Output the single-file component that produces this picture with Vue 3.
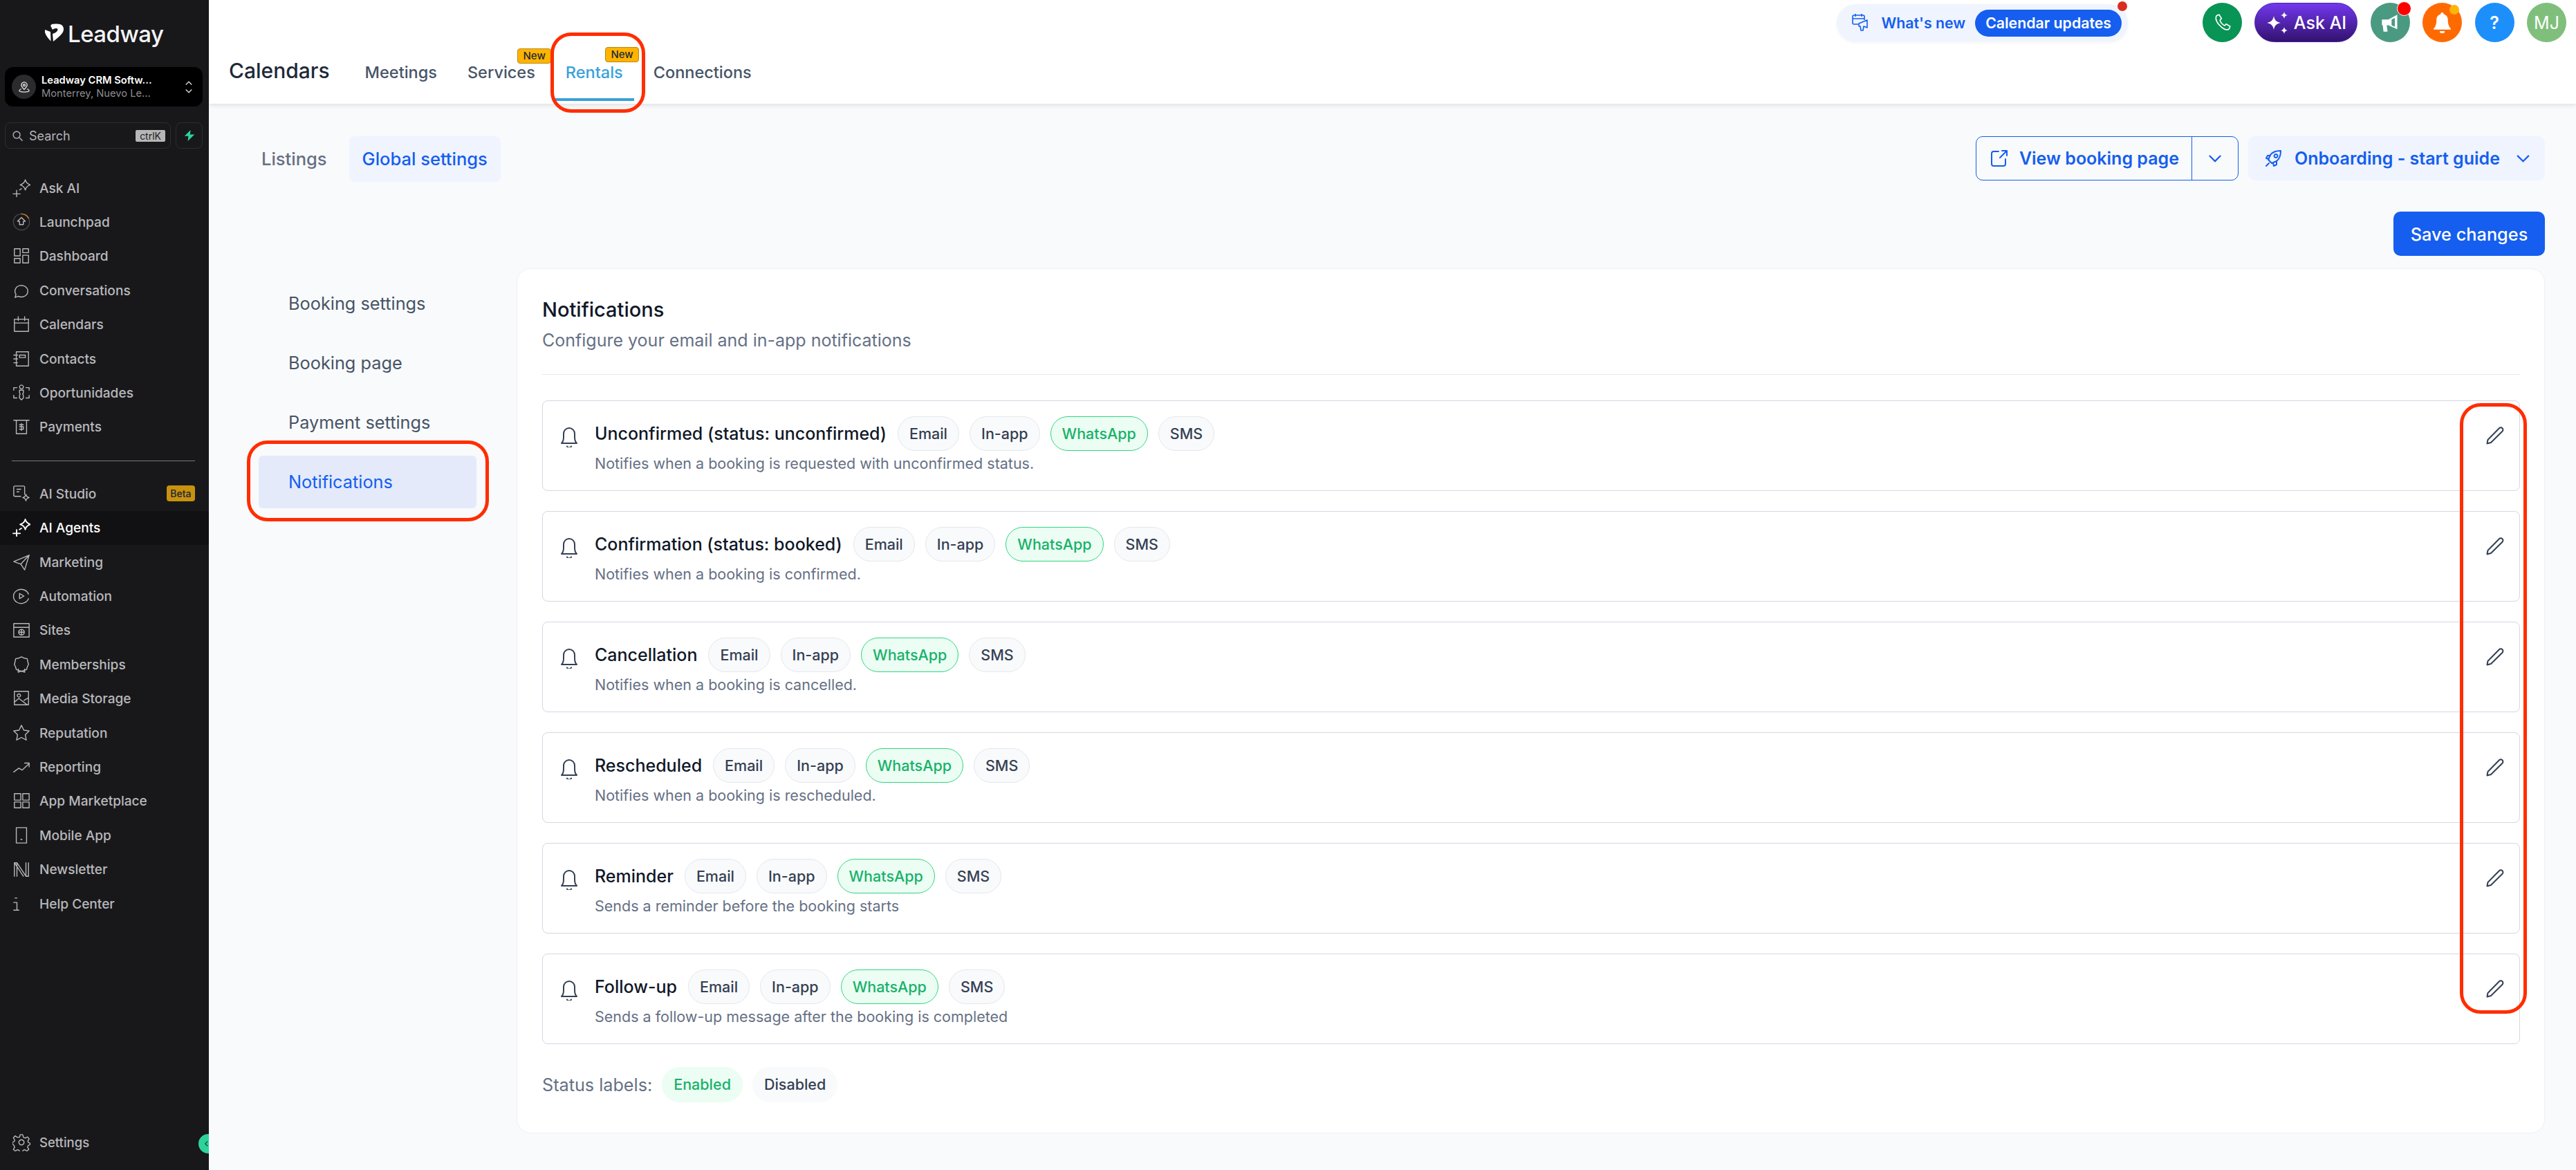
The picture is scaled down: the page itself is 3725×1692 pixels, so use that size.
<template>
  <div class="app">
    <aside class="sidebar">
      <div class="logo">
        <svg class="logo-mark" viewBox="0 0 28 30">
          <path d="M8 3 L10 1 C13 .5 19 0 23 1.5 C28 4 28 10 25 14 C22 18 17 22 12 26 L11 15 C14 14 18 12 18.500 9 C18.500 6 13 7 11 9 Z" fill="#fff" />
          <path d="M0 9 L8 12 L8.500 25.500 C5 22 1.500 18 0 13 Z" fill="#fff" />
        </svg>
        <span class="logo-text">Leadway</span>
      </div>

      <div class="location">
        <span class="location-icon">
          <svg viewBox="0 0 24 24" class="icon-sm"><path d="M12 3.500a5 5 0 0 0-5 5c0 3 3 5.500 5 7.500 2-2 5-4.500 5-7.500a5 5 0 0 0-5-5z" /><circle cx="12" cy="8.500" r="1.800" /><path d="M7 15c-2 .8-3.500 1.800-3.500 3 0 1.700 3.800 2.500 8.500 2.500s8.500-.8 8.500-2.500c0-1.200-1.500-2.200-3.500-3" /></svg>
        </span>
        <span class="location-text">
          <span class="location-name">Leadway CRM Softw...</span>
          <span class="location-city">Monterrey, Nuevo Le...</span>
        </span>
        <svg viewBox="0 0 14 24" class="location-arrows"><path d="M2 8l5-5 5 5M2 16l5 5 5-5" /></svg>
      </div>

      <div class="search-row">
        <div class="search">
          <svg viewBox="0 0 24 24" class="search-icon"><circle cx="10" cy="10" r="7" /><path d="M15.500 15.500L22 22" /></svg>
          <span class="search-label">Search</span>
          <span class="kbd">ctrlK</span>
        </div>
        <div class="bolt">
          <svg viewBox="0 0 20 20" width="16" height="16"><path d="M12 0L1 11h7l-1 9 12-12h-8z" fill="#2fd29a" /></svg>
        </div>
      </div>

      <nav class="nav nav-first">
        <div v-for="item in navTop" :key="item.label" class="nav-item">
          <svg viewBox="0 0 28 28" class="nav-icon">
            <template v-if="item.ring">
              <circle class="ring" cx="14" cy="14" r="12.500" />
              <path class="ring-arc" d="M14 1.500a12.500 12.500 0 0 1 11 6.500" />
            </template>
            <path v-for="(d, i) in icons[item.icon]" :key="i" :d="d" />
          </svg>
          <span>{{ item.label }}</span>
        </div>
      </nav>

      <div class="nav-divider"></div>

      <nav class="nav">
        <div
          v-for="item in navBottom"
          :key="item.label"
          class="nav-item"
          :class="{ 'nav-active': item.active }"
        >
          <svg viewBox="0 0 28 28" class="nav-icon"><path v-for="(d, i) in icons[item.icon]" :key="i" :d="d" /></svg>
          <span>{{ item.label }}</span>
          <span v-if="item.badge" class="beta">{{ item.badge }}</span>
        </div>
      </nav>

      <div class="settings">
        <svg viewBox="0 0 28 28" class="nav-icon"><path v-for="(d, i) in icons.gear" :key="i" :d="d" /></svg>
        <span>Settings</span>
        <span class="collapse">
          <svg viewBox="0 0 12 16" width="10" height="14"><path d="M9 2L3 8l6 6" /></svg>
        </span>
      </div>
    </aside>

    <div class="main">
      <header class="header">
        <div class="header-left">
          <div class="page-title">Calendars</div>
          <div class="tabs">
            <div
              v-for="tab in tabs"
              :key="tab.label"
              class="tab"
              :class="{ 'tab-active': tab.active }"
            >
              {{ tab.label }}
              <span v-if="tab.isNew" class="new-badge">New</span>
            </div>
          </div>
        </div>
        <div class="header-right">
          <div class="whats-new">
            <svg viewBox="0 0 28 28" class="whats-icon">
              <path d="M10 16H4a2 2 0 0 1-2-2V5a2 2 0 0 1 2-2h13a2 2 0 0 1 2 2v5M2 8h17M6 1v4M15 1v4" />
              <path d="M11 15l12-5v11l-5-2-1 6h-3l-1-6h-2z" />
            </svg>
            <span class="whats-label">What's new</span>
            <span class="whats-pill">Calendar updates</span>
            <span class="whats-dot"></span>
          </div>
          <div class="round-buttons">
            <span class="round phone">
              <svg viewBox="0 0 24 24" width="27" height="27"><path d="M5 3l3-1 3 5-2 2c.7 2.500 3 5.500 6 7l2-2 5 3-1 3c-1 1.500-3 1.500-5 1-3-1-6-3.500-8.500-6.500S4 9 3.800 7C3.700 5 4 4 5 3z" /></svg>
            </span>
            <span class="ask-ai">
              <svg viewBox="0 0 32 36" width="32" height="36"><path d="M11 8c1 6 4 9 10 10-6 1-9 4-10 10-1-6-4-9-10-10 6-1 9-4 10-10zM26 2c.6 3 2 4.400 5 5-3 .6-4.400 2-5 5-.6-3-2-4.400-5-5 3-.6 4.400-2 5-5zM26 24c.6 3 2 4.400 5 5-3 .6-4.400 2-5 5-.6-3-2-4.400-5-5 3-.6 4.400-2 5-5z" fill="#fff" /></svg>
              Ask AI
            </span>
            <span class="round megaphone">
              <svg viewBox="1 1 22 24" width="26" height="28"><path d="M2 9h8l11-6v18l-11-5H8l1 8H4l-1-8H2zM14 9v7l4 2V7z" fill="#fff" fill-rule="evenodd" /></svg>
              <span class="dot-red"></span>
            </span>
            <span class="round bell-btn">
              <svg viewBox="0 0 26 30" width="27" height="31"><path d="M13 1a2 2 0 0 1 2 2.500c4 1 6 4 6 8 0 5 1 9 4 12v1.500H1V23.500c3-3 4-7 4-12 0-4 2-7 6-8A2 2 0 0 1 13 1zM9.500 27h7a3.500 3.500 0 0 1-7 0z" fill="#fff" /></svg>
              <span class="dot-yellow"></span>
            </span>
            <span class="round help">?</span>
            <span class="round avatar">MJ</span>
          </div>
        </div>
      </header>

      <div class="content">
        <div class="toolbar">
          <div class="subtabs">
            <span class="subtab">Listings</span>
            <span class="subtab subtab-active">Global settings</span>
          </div>
          <div class="toolbar-actions">
            <div class="view-booking">
              <span class="view-main">
                <svg viewBox="0 0 26 26" class="btn-icon"><path d="M12 3H5a3 3 0 0 0-3 3v15a3 3 0 0 0 3 3h14a3 3 0 0 0 3-3v-7M14 12L24 2M17 2h7v7" /></svg>
                View booking page
              </span>
              <span class="view-caret">
                <svg viewBox="0 0 22 14" class="caret"><path d="M2 2l9 9 9-9" /></svg>
              </span>
            </div>
            <div class="onboarding">
              <svg viewBox="0 0 26 26" class="btn-icon"><path d="M8 18l-3-3 3-7c3-4 8-6 15-6 0 7-2 12-6 15l-7 3zM8 9H4l-2 4 4 1M17 18v4l-4 2-1-4M6 20l-4 4M16 7a2.500 2.500 0 1 0 .1 0z" /></svg>
              Onboarding - start guide
              <svg viewBox="0 0 22 14" class="caret onboarding-caret"><path d="M2 2l9 9 9-9" /></svg>
            </div>
          </div>
        </div>

        <div class="save-row">
          <button class="save">Save changes</button>
        </div>

        <div class="settings-layout">
          <div class="side-menu">
            <div
              v-for="entry in sideMenu"
              :key="entry.label"
              class="side-item"
              :class="{ 'side-active': entry.active }"
            >{{ entry.label }}</div>
          </div>

          <section class="card">
            <h2 class="card-title">Notifications</h2>
            <p class="card-sub">Configure your email and in-app notifications</p>
            <div class="card-divider"></div>

            <div class="rows">
              <div v-for="row in rows" :key="row.title" class="row">
                <svg viewBox="0 0 26 30" class="row-bell"><path d="M2 24c2-2 3-5 3-9v-5a8 8 0 0 1 16 0v5c0 4 1 7 3 9z" /><path d="M10 28.500a3.200 3.200 0 0 0 6 0" /></svg>
                <div class="row-body">
                  <div class="row-head">
                    <span class="row-title">{{ row.title }}</span>
                    <span
                      v-for="chip in channels"
                      :key="chip"
                      class="chip"
                      :class="{ 'chip-green': chip === 'WhatsApp' }"
                    >{{ chip }}</span>
                  </div>
                  <div class="row-desc">{{ row.desc }}</div>
                </div>
                <svg viewBox="0 0 26 26" class="pencil"><path d="M1.500 24.500l1-5.500L19 2.300a3 3 0 0 1 4.500 4.400L7 23z" /></svg>
              </div>
            </div>

            <div class="status">
              <span class="status-label">Status labels:</span>
              <span class="status-chip status-on">Enabled</span>
              <span class="status-chip status-off">Disabled</span>
            </div>
          </section>
        </div>
      </div>
    </div>

    <!-- hand drawn annotations that sit on top of the screenshot -->
    <div class="mark mark-rentals"></div>
    <div class="mark mark-notifications"></div>
    <div class="mark mark-pencils"></div>
  </div>
</template>

<script setup>
const icons = {
  spark: ['M1 23h11M6.500 17.500v11M11 17l3-2M20 1c1 4.500 3 6.500 8 8-5 1.500-7 3.500-8 8-1-4.500-3-6.500-8-8 5-1.500 7-3.500 8-8z'],
  launch: ['M14 7l6 6h-3v5h-6v-5H8z'],
  dashboard: ['M3 3h9v11H3zM16 3h9v6h-9zM3 18h9v7H3zM16 13h9v12h-9z'],
  chat: ['M4 25l1.500-5A10 9 0 1 1 9 23z'],
  calendar: ['M3 6h22v19H3zM3 12h22M9 2v6M19 2v6'],
  contacts: ['M6 3h19v22H6zM2 8h6M2 14h6M2 20h6M11 8h9v4h-9z'],
  opps: ['M14 2a3 3 0 1 0 .1 0zM11 10h6v4l-1 2 1 2v4l-3 3-3-3v-4l1-2-1-2zM2 6h5M2 6v4M26 6h-5M26 6v4M2 22h5M2 22v-4M26 22h-5M26 22v-4'],
  payments: ['M2 4h24M6 4v21h16V4M11 11h6M11 14h6v4h-6M14 9v11'],
  studio: ['M19 15V4a2 2 0 0 0-2-2H4a2 2 0 0 0-2 2v12a2 2 0 0 0 2 2h9M7 7h6M7 11h3M21 15c.5 3 2 4.500 5 5-3 .5-4.500 2-5 5-.5-3-2-4.500-5-5 3-.5 4.500-2 5-5z'],
  send: ['M2 13L26 3l-7 23-6-9zM13 17L26 3'],
  play: ['M25 11A12 11 0 1 0 25 18M11 10l7 4-7 4z'],
  site: ['M2 4h24v21H2zM2 10h24M14 13a4.500 4.500 0 1 0 .1 0zM9.500 17.500h9M14 13v9'],
  badge: ['M14 2l4 2 5 1 1 5 1 4-2 4-1 4-4 1-4 2-4-2-4-1-1-4-2-4 1-4 1-5 5-1zM9 21v5l5-2 5 2v-5'],
  media: ['M3 3h22v21H3zM3 20l7-6 13 10M18 17l7-4M10 7a2.500 2.500 0 1 0 .1 0z'],
  star: ['M14 2l3.700 7.700 8.300 1.100-6 5.800 1.500 8.400-7.500-4-7.500 4 1.500-8.400-6-5.800 8.300-1.100z'],
  trend: ['M2 22l8-6 5 3 11-10M19 8h7v6'],
  grid: ['M3 3h10v10H3zM16 3h10v10H16zM3 16h10v9H3zM16 16h10v9H16z'],
  phone: ['M6 2h16v24H6zM13 20.500h2'],
  news: ['M3 25V4h4l14 21h4V4M7 4v21M21 4v21M3 4l14 21'],
  info: ['M4 5h3M2 12h5v12M2 24h8'],
  gear: ['M12 2h4l1 4 3 1.500 3.500-2 2.500 3-2 3.500.5 2 3 1.500v2l-3 1.500-1 2.500 2 3.500-3 2.500-3.500-2-2.500 1-1 3h-4l-1-3-2.500-1-3.500 2-3-2.500 2-3.500-1-2.500L0 16v-2l3-1.500.5-2-2-3.500L4 4l3.500 2L11 6zM14 10a4 4 0 1 0 .1 0z']
}

const navTop = [
  { label: 'Ask AI', icon: 'spark' },
  { label: 'Launchpad', icon: 'launch', ring: true },
  { label: 'Dashboard', icon: 'dashboard' },
  { label: 'Conversations', icon: 'chat' },
  { label: 'Calendars', icon: 'calendar' },
  { label: 'Contacts', icon: 'contacts' },
  { label: 'Oportunidades', icon: 'opps' },
  { label: 'Payments', icon: 'payments' }
]

const navBottom = [
  { label: 'AI Studio', icon: 'studio', badge: 'Beta' },
  { label: 'AI Agents', icon: 'spark', active: true },
  { label: 'Marketing', icon: 'send' },
  { label: 'Automation', icon: 'play' },
  { label: 'Sites', icon: 'site' },
  { label: 'Memberships', icon: 'badge' },
  { label: 'Media Storage', icon: 'media' },
  { label: 'Reputation', icon: 'star' },
  { label: 'Reporting', icon: 'trend' },
  { label: 'App Marketplace', icon: 'grid' },
  { label: 'Mobile App', icon: 'phone' },
  { label: 'Newsletter', icon: 'news' },
  { label: 'Help Center', icon: 'info' }
]

const tabs = [
  { label: 'Meetings' },
  { label: 'Services', isNew: true },
  { label: 'Rentals', isNew: true, active: true },
  { label: 'Connections' }
]

const sideMenu = [
  { label: 'Booking settings' },
  { label: 'Booking page' },
  { label: 'Payment settings' },
  { label: 'Notifications', active: true }
]

const channels = ['Email', 'In-app', 'WhatsApp', 'SMS']

const rows = [
  { title: 'Unconfirmed (status: unconfirmed)', desc: 'Notifies when a booking is requested with unconfirmed status.' },
  { title: 'Confirmation (status: booked)', desc: 'Notifies when a booking is confirmed.' },
  { title: 'Cancellation', desc: 'Notifies when a booking is cancelled.' },
  { title: 'Rescheduled', desc: 'Notifies when a booking is rescheduled.' },
  { title: 'Reminder', desc: 'Sends a reminder before the booking starts' },
  { title: 'Follow-up', desc: 'Sends a follow-up message after the booking is completed' }
]
</script>

<style>
html, body {
  margin: 0;
  background: #f9fafb;
}
</style>

<style scoped>
.app {
  position: relative;
  display: flex;
  width: 3725px;
  height: 1692px;
  overflow: hidden;
  font-family: Inter, "Liberation Sans", sans-serif;
  background: #f9fafb;
}

/* sidebar */
.sidebar {
  position: relative;
  display: flex;
  flex-direction: column;
  flex: 0 0 302px;
  background: #18181b;
  color: #b8b8bb;
}

.logo {
  display: flex;
  align-items: center;
  gap: 5px;
  height: 97px;
  padding-left: 65px;
  box-sizing: border-box;
}

.logo-mark {
  width: 28px;
  height: 30px;
}

.logo-text {
  color: #f4f4f5;
  font-size: 33px;
  font-weight: 500;
  letter-spacing: -0.5px;
}

.location {
  display: flex;
  align-items: center;
  height: 57px;
  margin: 0 9px 0 7px;
  padding: 0 14px 0 10px;
  background: #000;
  border-radius: 12px;
}

.location-icon {
  display: flex;
  align-items: center;
  justify-content: center;
  width: 35px;
  height: 35px;
  border-radius: 50%;
  background: #2b2b2e;
}

.icon-sm {
  width: 20px;
  height: 20px;
  fill: none;
  stroke: #e4e4e7;
  stroke-width: 1.600;
}

.location-text {
  display: flex;
  flex-direction: column;
  flex: 1;
  margin-left: 8px;
  gap: 1px;
  white-space: nowrap;
}

.location-name {
  color: #fff;
  font-size: 14.700px;
  font-weight: 600;
  line-height: 18px;
}

.location-city {
  color: #8c8c90;
  font-size: 14.700px;
  line-height: 18px;
}

.location-arrows {
  width: 12px;
  height: 22px;
  fill: none;
  stroke: #d4d4d8;
  stroke-width: 1.600;
}

.search-row {
  display: flex;
  gap: 7px;
  margin: 23px 9px 0 7px;
}

.search {
  display: flex;
  align-items: center;
  flex: 1;
  height: 38px;
  padding: 0 7px 0 9px;
  border: 1px solid #2d2d31;
  border-radius: 8px;
  box-sizing: border-box;
}

.search-icon {
  width: 17px;
  height: 17px;
  fill: none;
  stroke: #a1a1aa;
  stroke-width: 2.200;
}

.search-label {
  flex: 1;
  margin-left: 8px;
  font-size: 18px;
  color: #b3b3b6;
}

.kbd {
  padding: 0 6px;
  background: #b6b6b8;
  color: #222;
  font-size: 14px;
  line-height: 17px;
  border-radius: 2px;
}

.bolt {
  display: flex;
  align-items: center;
  justify-content: center;
  width: 39px;
  height: 38px;
  border: 1px solid #2d2d31;
  border-radius: 8px;
  box-sizing: border-box;
}

.nav {
  display: flex;
  flex-direction: column;
}

.nav-first {
  margin-top: 32px;
}

.nav-item {
  display: flex;
  align-items: center;
  height: 49.400px;
  padding: 0 20px 0 18px;
  font-size: 19.100px;
  font-weight: 500;
}

.nav-item span:first-of-type {
  margin-left: 13px;
}

.nav-icon {
  flex: none;
  width: 26px;
  height: 26px;
  fill: none;
  stroke: #b8b8bb;
  stroke-width: 1.500;
  stroke-linejoin: round;
  stroke-linecap: round;
}

.ring {
  stroke: #47474b;
}

.ring-arc {
  stroke: #d9822b;
}

.nav-divider {
  height: 1px;
  margin: 24px 20px 22px 17px;
  background: #77777b;
}

.nav-active {
  color: #fff;
  background: #111113;
  border-radius: 4px;
}

.nav-active .nav-icon {
  stroke: #fff;
  stroke-width: 2;
}

.beta {
  margin-left: auto;
  padding: 0 5.500px;
  background: #c8920c;
  color: #18233f;
  font-size: 14px;
  line-height: 23px;
  border-radius: 4px;
}

.settings {
  position: relative;
  display: flex;
  align-items: center;
  gap: 13px;
  margin-top: auto;
  height: 80px;
  padding: 0 0 0 18px;
  font-size: 18.500px;
  font-weight: 500;
}

.collapse {
  position: absolute;
  right: 0;
  top: 28px;
  display: flex;
  align-items: center;
  width: 15px;
  height: 28px;
  background: #2fd29a;
  border-radius: 14px 0 0 14px;
  overflow: hidden;
}

.collapse svg {
  margin-left: 8px;
  fill: none;
  stroke: #0f5c45;
  stroke-width: 2.500;
}

/* header */
.main {
  display: flex;
  flex-direction: column;
  flex: 1;
  min-width: 0;
}

.header {
  display: flex;
  justify-content: space-between;
  height: 150px;
  padding: 0 14px 0 29px;
  background: #fff;
  box-shadow: 0 2px 6px rgba(16, 24, 40, 0.12);
  position: relative;
}

.header-left {
  display: flex;
  align-items: flex-end;
  gap: 35px;
  padding-bottom: 4px;
}

.page-title {
  padding-bottom: 26px;
  color: #1d2939;
  font-size: 30px;
  font-weight: 500;
  line-height: 36px;
}

.tabs {
  display: flex;
  gap: 12px;
}

.tab {
  position: relative;
  padding: 0 16px 18px;
  border-bottom: 4px solid transparent;
  color: #475467;
  font-size: 23.500px;
  font-weight: 500;
  line-height: 38px;
  white-space: nowrap;
}

.tab-active {
  color: #38a0db;
  border-bottom-color: #38a0db;
}

.new-badge {
  position: absolute;
  right: -7px;
  top: -16px;
  padding: 0 7px;
  background: #ffb400;
  border: 1px solid #b98a11;
  border-radius: 4px;
  color: #1d2939;
  font-size: 15px;
  line-height: 20px;
}

.tab-active .new-badge {
  top: -18px;
}

.header-right {
  display: flex;
  align-items: flex-start;
  gap: 108px;
  padding-top: 4px;
}

.whats-new {
  position: relative;
  display: flex;
  align-items: center;
  height: 54px;
  margin-top: 2px;
  padding: 0 9px 0 21px;
  background: #eff4ff;
  border-radius: 27px;
  box-shadow: 0 2px 4px rgba(16, 24, 40, 0.05);
}

.whats-icon {
  width: 28px;
  height: 28px;
  fill: none;
  stroke: #155eef;
  stroke-width: 1.600;
  stroke-linejoin: round;
}

.whats-label {
  margin: 0 14px 0 16px;
  color: #155eef;
  font-size: 21.300px;
  font-weight: 600;
}

.whats-pill {
  padding: 0 15px;
  background: #155eef;
  color: #fff;
  font-size: 21.300px;
  font-weight: 600;
  line-height: 39px;
  border-radius: 20px;
}

.whats-dot {
  position: absolute;
  right: 1px;
  top: -4px;
  width: 14px;
  height: 14px;
  border-radius: 50%;
  background: #d92d20;
}

.round-buttons {
  display: flex;
  gap: 18.400px;
}

.round {
  position: relative;
  display: flex;
  align-items: center;
  justify-content: center;
  width: 57px;
  height: 57px;
  border-radius: 50%;
  color: #fff;
  font-size: 25px;
}

.phone {
  background: #079455;
}

.phone svg {
  fill: none;
  stroke: #fff;
  stroke-width: 1.500;
}

.ask-ai {
  display: flex;
  align-items: center;
  justify-content: center;
  gap: 8px;
  width: 149px;
  height: 57px;
  box-sizing: border-box;
  border: 1px solid #4a22a8;
  border-radius: 29px;
  background: linear-gradient(180deg, #7337ee 0%, #32126f 100%);
  color: #fff;
  font-size: 25px;
  font-weight: 500;
}

.megaphone {
  background: #4a9a82;
}

.dot-red {
  position: absolute;
  top: -2px;
  right: -2px;
  width: 19px;
  height: 19px;
  border-radius: 50%;
  background: #ff0000;
  border: 1px solid #fff;
}

.bell-btn {
  background: #ff6a00;
}

.dot-yellow {
  position: absolute;
  top: 3px;
  right: 4px;
  width: 14px;
  height: 14px;
  border-radius: 50%;
  background: #fdb408;
}

.help {
  background: #1c8ffb;
  font-weight: 600;
}

.avatar {
  background: #7fbf7b;
  font-size: 25px;
}

/* content */
.content {
  display: flex;
  flex-direction: column;
  flex: 1;
  padding: 47px 45px 0 57px;
}

.toolbar {
  display: flex;
  justify-content: space-between;
  align-items: flex-start;
}

.subtabs {
  display: flex;
  gap: 13px;
}

.subtab {
  padding: 0 19px;
  color: #667085;
  font-size: 25.500px;
  font-weight: 500;
  line-height: 66px;
  border-radius: 8px;
}

.subtab-active {
  background: #eff4ff;
  color: #155eef;
}

.toolbar-actions {
  display: flex;
  gap: 14px;
}

.view-booking {
  display: flex;
  height: 64px;
  box-sizing: border-box;
  border: 1px solid #155eef;
  border-radius: 10px;
  color: #155eef;
  font-size: 25px;
  font-weight: 600;
}

.view-main {
  display: flex;
  align-items: center;
  gap: 16px;
  padding: 0 18px 0 20px;
}

.view-caret {
  display: flex;
  align-items: center;
  justify-content: center;
  width: 66px;
  border-left: 1px solid #155eef;
}

.btn-icon {
  width: 26px;
  height: 26px;
  fill: none;
  stroke: #155eef;
  stroke-width: 2;
  stroke-linejoin: round;
  stroke-linecap: round;
}

.caret {
  width: 20px;
  height: 13px;
  fill: none;
  stroke: #155eef;
  stroke-width: 2.400;
}

.onboarding-caret {
  width: 23px;
  margin-left: 5px;
}

.onboarding {
  display: flex;
  align-items: center;
  gap: 17px;
  height: 64px;
  padding: 0 20px 0 24px;
  background: #eff4ff;
  border-radius: 10px;
  color: #155eef;
  font-size: 25px;
  font-weight: 600;
}

.save-row {
  display: flex;
  justify-content: flex-end;
  margin-top: 43px;
}

.save {
  width: 219px;
  height: 64px;
  border: 0;
  border-radius: 10px;
  background: #155eef;
  color: #fff;
  font-family: inherit;
  font-size: 25.300px;
  font-weight: 500;
}

.settings-layout {
  display: flex;
  margin-top: 18px;
  gap: 58px;
}

.side-menu {
  display: flex;
  flex-direction: column;
  flex: 0 0 315px;
  gap: 10px;
  margin: 13px 0 0 15px;
}

.side-item {
  padding-left: 43px;
  color: #475467;
  font-size: 25.300px;
  font-weight: 400;
  line-height: 76px;
  border-radius: 6px;
}

.side-active {
  background: #e4eafa;
  color: #155eef;
}

.card {
  flex: 1;
  height: 1251px;
  box-sizing: border-box;
  padding: 41px 35px 0 36px;
  background: #fff;
  border: 1px solid #eef0f4;
  border-radius: 20px;
}

.card-title {
  margin: 0;
  color: #101828;
  font-size: 29px;
  font-weight: 500;
  line-height: 36px;
}

.card-sub {
  margin: 9px 0 0;
  color: #667085;
  font-size: 25px;
  line-height: 34px;
}

.card-divider {
  height: 1px;
  margin-top: 32px;
  background: #e6e8ec;
}

.rows {
  display: flex;
  flex-direction: column;
  gap: 29px;
  margin-top: 37px;
}

.row {
  display: flex;
  align-items: flex-start;
  height: 131px;
  box-sizing: border-box;
  padding: 22px 22px 0 25px;
  border: 1px solid #d5d7e2;
  border-radius: 8px;
}

.row-bell {
  flex: none;
  width: 26px;
  height: 30px;
  margin-top: 15px;
  fill: none;
  stroke: #344054;
  stroke-width: 2;
  stroke-linejoin: round;
  stroke-linecap: round;
}

.row-body {
  flex: 1;
  margin-left: 24px;
}

.row-head {
  display: flex;
  align-items: center;
  gap: 15px;
}

.row-title {
  margin-right: 1px;
  color: #101828;
  font-size: 25px;
  font-weight: 500;
}

.chip {
  padding: 0 16px;
  background: #f9fafb;
  border: 1px solid #e4e7ec;
  border-radius: 25px;
  color: #344054;
  font-size: 21.500px;
  font-weight: 500;
  line-height: 48px;
}

.chip-green {
  background: #ecfdf3;
  border-color: #32d583;
  color: #17b26a;
}

.row-desc {
  margin-top: 3px;
  color: #667085;
  font-size: 21.500px;
  line-height: 30px;
}

.pencil {
  flex: none;
  width: 26px;
  height: 26px;
  margin-top: 15px;
  fill: none;
  stroke: #344054;
  stroke-width: 2;
  stroke-linejoin: round;
}

.status {
  display: flex;
  align-items: center;
  gap: 14px;
  margin-top: 33px;
}

.status-label {
  color: #667085;
  font-size: 25.200px;
}

.status-chip {
  padding: 0 17px;
  border-radius: 26px;
  font-size: 21.500px;
  font-weight: 500;
  line-height: 51px;
}

.status-on {
  background: #ecfdf3;
  color: #17b26a;
}

.status-off {
  background: #f9fafb;
  color: #344054;
}

/* red marks */
.mark {
  position: absolute;
  box-sizing: border-box;
  border: 5px solid #ff2d00;
  border-radius: 30px;
  pointer-events: none;
}

.mark-rentals {
  left: 796px;
  top: 47px;
  width: 137px;
  height: 116px;
}

.mark-notifications {
  left: 357px;
  top: 637px;
  width: 350px;
  height: 117px;
}

.mark-pencils {
  left: 3557px;
  top: 583px;
  width: 97px;
  height: 883px;
}
</style>
